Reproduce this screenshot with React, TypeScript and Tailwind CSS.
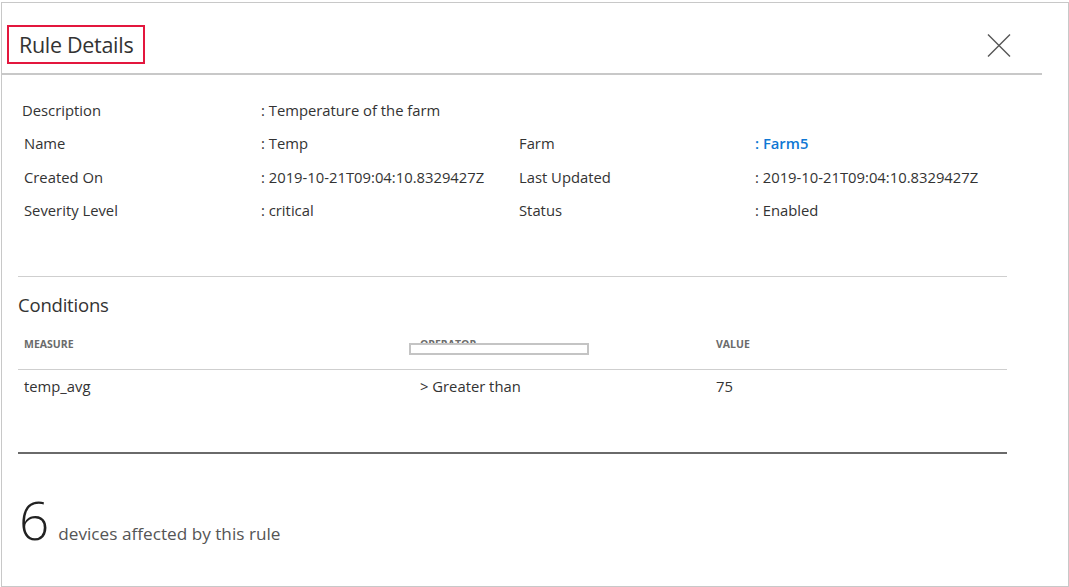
const font = { fontFamily: '"Open Sans", "Noto Sans", Arial, sans-serif' };

const rows = [
  { label: "Name", value: "Temp", label2: "Farm", value2: "Farm5", link: true },
  { label: "Created On", value: "2019-10-21T09:04:10.8329427Z", label2: "Last Updated", value2: "2019-10-21T09:04:10.8329427Z" },
  { label: "Severity Level", value: "critical", label2: "Status", value2: "Enabled" },
];

export default function App() {
  return (
    <div className="w-[1069px] h-[587px] bg-white overflow-hidden" style={font}>
      <div className="ml-[1px] mt-[2px] w-[1068px] h-[585px] border border-[#c8c8c8] bg-white flex flex-col">
        {/* header */}
        <div className="w-[1040px] h-[72px] border-b-2 border-[#c8c8c8] flex items-start shrink-0">
          <div className="ml-[5px] mt-[22px] w-[138px] h-[39px] border-2 border-[#e3173e] flex items-center pl-[10px]">
            <h2 className="text-[21.5px] text-[#333] leading-none tracking-[-0.3px]">Rule Details</h2>
          </div>
          <button className="ml-auto mr-[31px] mt-[30px] w-[24px] h-[25px] flex items-center justify-center">
            <svg width="24" height="25" viewBox="0 0 24 25" fill="none" stroke="#555" strokeWidth="1.4">
              <path d="M1 1.5 L23 23.5 M23 1.5 L1 23.5" />
            </svg>
          </button>
        </div>

        {/* details */}
        <div className="pt-[18px] pl-[22px] text-[14.8px] text-[#333]">
          <div className="h-[33.5px] flex items-center -ml-[2px]">
            <span className="w-[239px]">Description</span>
            <span>: Temperature of the farm</span>
          </div>
          {rows.map((r) => (
            <div key={r.label} className="h-[33.5px] grid grid-cols-[237px_258px_236px_1fr] items-center">
              <span>{r.label}</span>
              <span>: {r.value}</span>
              <span>{r.label2}</span>
              <span className={r.link ? "text-[#0f78d4] font-semibold" : ""}>: {r.value2}</span>
            </div>
          ))}
        </div>

        <div className="ml-[16px] w-[989px] h-px bg-[#cfcfcf] mt-[49px]" />

        {/* conditions */}
        <div className="ml-[16px] w-[989px]">
          <h3 className="text-[18.5px] text-[#333] h-[28px] mt-[14px] leading-[28px] tracking-[-0.2px]">Conditions</h3>
          <div className="h-[50px] pt-[2px] grid grid-cols-[396px_296px_1fr] items-center pl-[6px] text-[10.5px] font-bold text-[#6b6b6b]">
            <span>MEASURE</span>
            <span className="relative">
              OPERATOR
              <span className="absolute left-[-11px] top-[6px] w-[180px] h-[12px] border-2 border-[#c4c4c4] bg-white" />
            </span>
            <span>VALUE</span>
          </div>
          <div className="h-px bg-[#cfcfcf]" />
          <div className="h-[32px] grid grid-cols-[396px_296px_1fr] items-center pl-[6px] text-[14.8px] text-[#333]">
            <span>temp_avg</span>
            <span>&gt; Greater than</span>
            <span>75</span>
          </div>
          <div className="h-[2px] bg-[#6a6a6a] mt-[50px]" />
          <div className="mt-[39px] flex items-baseline">
            <span className="text-[53px] font-light text-[#222] leading-none ml-[1px]">6</span>
            <span className="text-[17.2px] text-[#555] ml-[9px]">devices affected by this rule</span>
          </div>
        </div>
      </div>
    </div>
  );
}
